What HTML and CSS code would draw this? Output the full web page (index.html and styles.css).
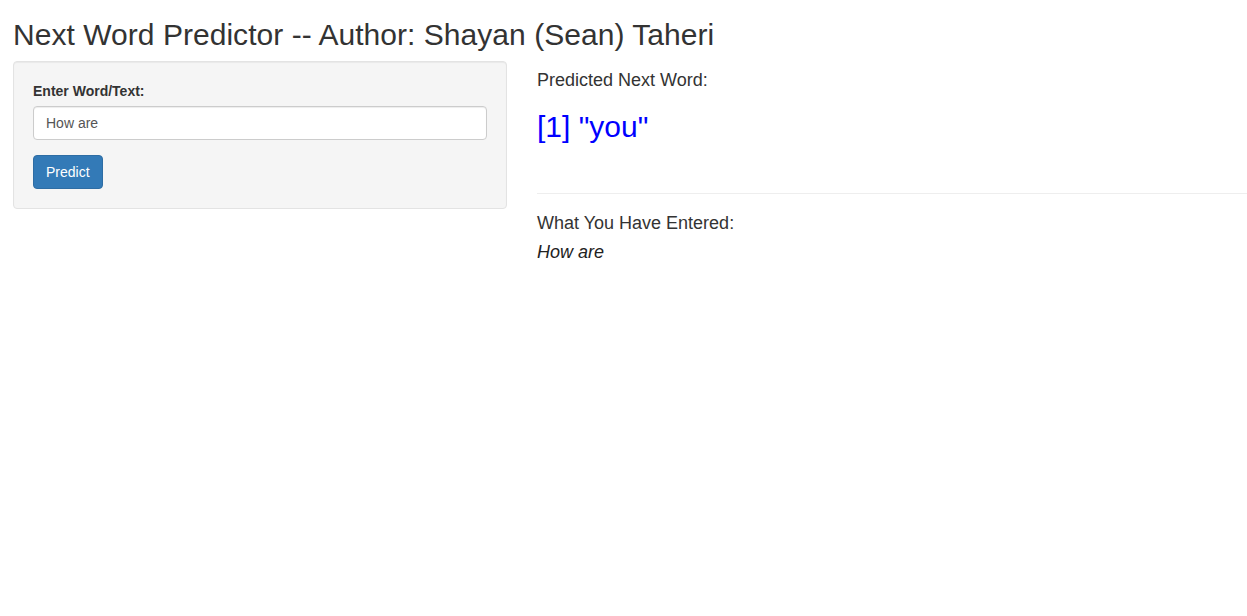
FILE: index.html
```html
<!DOCTYPE html>
<html lang="en">
<head>
<meta charset="utf-8">
<title>Next Word Predictor</title>
<link rel="stylesheet" href="styles.css">
</head>
<body>
<div class="container">
  <h2 class="title">Next Word Predictor -- Author: Shayan (Sean) Taheri</h2>
  <div class="row">
    <div class="sidebar well">
      <div class="form-group">
        <label class="control-label" for="text">Enter Word/Text:</label>
        <input class="form-control" id="text" type="text" value="How are">
      </div>
      <button class="btn-primary" type="button">Predict</button>
    </div>
    <div class="main">
      <h4 class="heading">Predicted Next Word:</h4>
      <div class="prediction">[1] "you"</div>
      <hr class="divider">
      <h4 class="heading heading-second">What You Have Entered:</h4>
      <div class="entered">How are</div>
    </div>
  </div>
</div>
</body>
</html>
```

FILE: styles.css
```css
html, body {
  margin: 0;
  padding: 0;
  background: #fff;
}

body {
  font-family: "Liberation Sans", Arial, Helvetica, sans-serif;
  font-size: 14px;
  line-height: 1.42857;
  color: #333;
}

.container {
  padding: 0 0 0 13px;
}

.title {
  margin: 18px 0 10px 0;
  font-size: 30px;
  font-weight: 500;
  line-height: 33px;
  letter-spacing: 0.04px;
  color: #333;
}

.row {
  display: flex;
  align-items: flex-start;
  gap: 30px;
}

.well {
  box-sizing: border-box;
  width: 494px;
  flex: 0 0 494px;
  padding: 19px;
  background: #f5f5f5;
  border: 1px solid #e3e3e3;
  border-radius: 4px;
  box-shadow: inset 0 1px 1px rgba(0, 0, 0, 0.05);
}

.form-group {
  margin-bottom: 15px;
}

.control-label {
  display: block;
  margin-bottom: 5px;
  font-weight: 700;
  line-height: 20px;
}

.form-control {
  display: block;
  box-sizing: border-box;
  width: 100%;
  height: 34px;
  margin: 0;
  padding: 6px 12px;
  font-family: inherit;
  font-size: 14px;
  line-height: 20px;
  color: #555;
  background: #fff;
  border: 1px solid #ccc;
  border-radius: 4px;
  box-shadow: inset 0 1px 1px rgba(0, 0, 0, 0.075);
}

.btn-primary {
  display: block;
  box-sizing: border-box;
  height: 34px;
  margin: 0;
  padding: 6px 12px;
  font-family: inherit;
  font-size: 14px;
  line-height: 20px;
  color: #fff;
  background: #337ab7;
  border: 1px solid #2e6da4;
  border-radius: 4px;
  cursor: pointer;
}

.main {
  flex: 1 1 auto;
  padding-top: 10px;
}

.heading {
  margin: 0;
  font-size: 18px;
  font-weight: 500;
  line-height: 19.8px;
  color: #333;
}

.prediction {
  margin-top: 19px;
  font-size: 30px;
  line-height: 33px;
  color: #0000ff;
}

.divider {
  margin: 50px 0 0 0;
  height: 0;
  border: 0;
  border-top: 1px solid #eee;
}

.heading-second {
  margin-top: 20px;
}

.entered {
  margin-top: 8px;
  font-size: 18px;
  font-style: italic;
  line-height: 20px;
  color: #222;
}
```
